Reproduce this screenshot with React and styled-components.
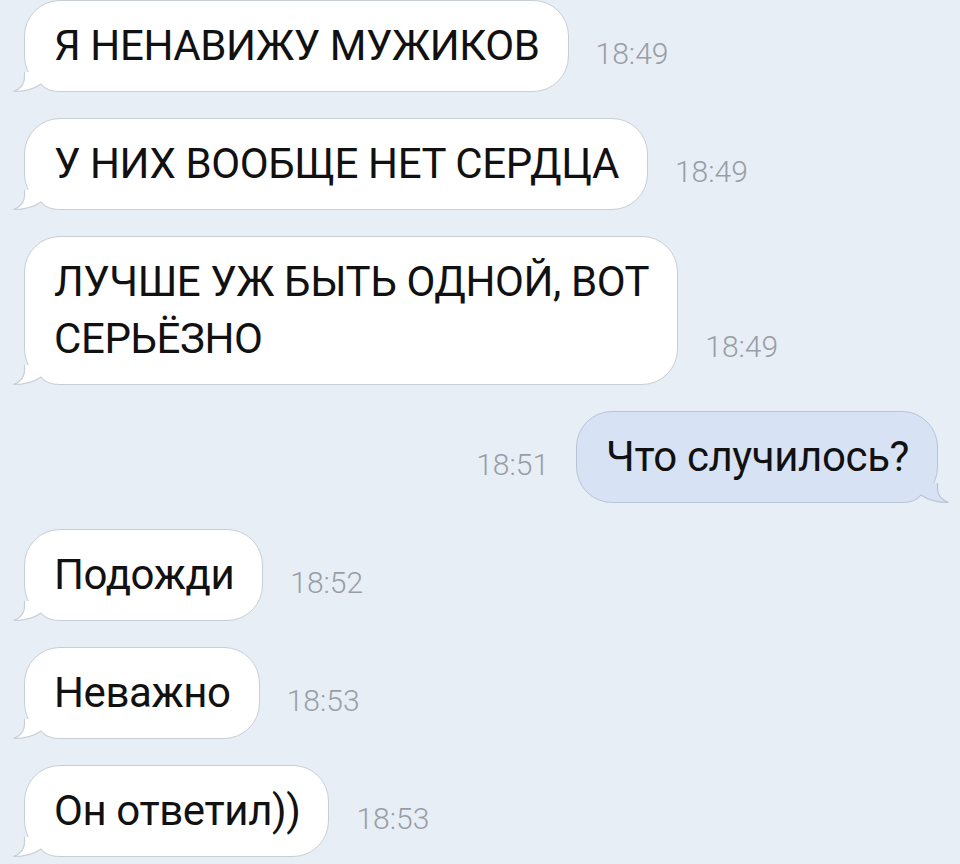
import React from 'react'
import styled, { createGlobalStyle } from 'styled-components'

const PAGE_BG = '#e8eef6'

const GlobalStyle = createGlobalStyle`
  html, body {
    margin: 0;
    padding: 0;
    background: ${PAGE_BG};
  }
  body {
    font-family: Roboto, "Liberation Sans", sans-serif;
    -webkit-font-smoothing: antialiased;
  }
`

const Chat = styled.div`
  width: 960px;
  height: 864px;
  overflow: hidden;
  background: ${PAGE_BG};
  display: flex;
  flex-direction: column;
  gap: 26px;
  box-sizing: border-box;
  padding-top: 0;
`

const Row = styled.div`
  display: flex;
  align-items: flex-end;
  gap: 27px;
  justify-content: ${({ out }) => (out ? 'flex-end' : 'flex-start')};
  padding: ${({ out }) => (out ? '0 22px 0 0' : '0 0 0 24px')};
`

const Bubble = styled.div`
  position: relative;
  box-sizing: border-box;
  padding: 16px 28px 17px 29px;
  border: 1px solid ${({ out }) => (out ? '#b8c4d5' : '#c9ced6')};
  background: ${({ out }) => (out ? '#d7e3f4' : '#ffffff')};
  border-radius: 36px;
  font-size: 42px;
  line-height: 57px;
  letter-spacing: -0.4px;
  color: #111111;
  white-space: nowrap;
`

const Text = styled.span`
  position: relative;
`

const Time = styled.span`
  font-size: 30px;
  font-weight: 300;
  line-height: 30px;
  color: #999ea6;
  margin-bottom: 23px;
  white-space: nowrap;
`

const TailSvg = styled.svg`
  position: absolute;
  bottom: -1px;
  ${({ out }) => (out ? 'right: -12px; transform: scaleX(-1);' : 'left: -12px;')}
  width: 56px;
  height: 32px;
  overflow: visible;
`

const Tail = ({ out }) => {
  const fill = out ? '#d7e3f4' : '#ffffff'
  const stroke = out ? '#b8c4d5' : '#c9ced6'
  const edge =
    'M 11.5 12 L 11.5 17 C 11.5 25, 6 30, 0.5 31.5 C 10 31.5, 21 29, 28 24 C 32 29, 38 31.5, 46 31.5 L 54 31.5'
  return (
    <TailSvg out={out} viewBox="0 0 56 32">
      <rect x="9" y="12" width="45" height="21" fill={PAGE_BG} />
      <path d={`${edge} L 54 12 Z`} fill={fill} />
      <path d={edge} fill="none" stroke={stroke} strokeWidth="1.2" />
    </TailSvg>
  )
}

const Message = ({ out, time, children }) => (
  <Row out={out}>
    {out && <Time>{time}</Time>}
    <Bubble out={out}>
      <Tail out={out} />
      <Text>{children}</Text>
    </Bubble>
    {!out && <Time>{time}</Time>}
  </Row>
)

const App = () => (
  <>
    <GlobalStyle />
    <Chat>
      <Message time="18:49">Я НЕНАВИЖУ МУЖИКОВ</Message>
      <Message time="18:49">У НИХ ВООБЩЕ НЕТ СЕРДЦА</Message>
      <Message time="18:49">
        ЛУЧШЕ УЖ БЫТЬ ОДНОЙ, ВОТ
        <br />
        СЕРЬЁЗНО
      </Message>
      <Message out time="18:51">Что случилось?</Message>
      <Message time="18:52">Подожди</Message>
      <Message time="18:53">Неважно</Message>
      <Message time="18:53">Он ответил))</Message>
    </Chat>
  </>
)

export default App
